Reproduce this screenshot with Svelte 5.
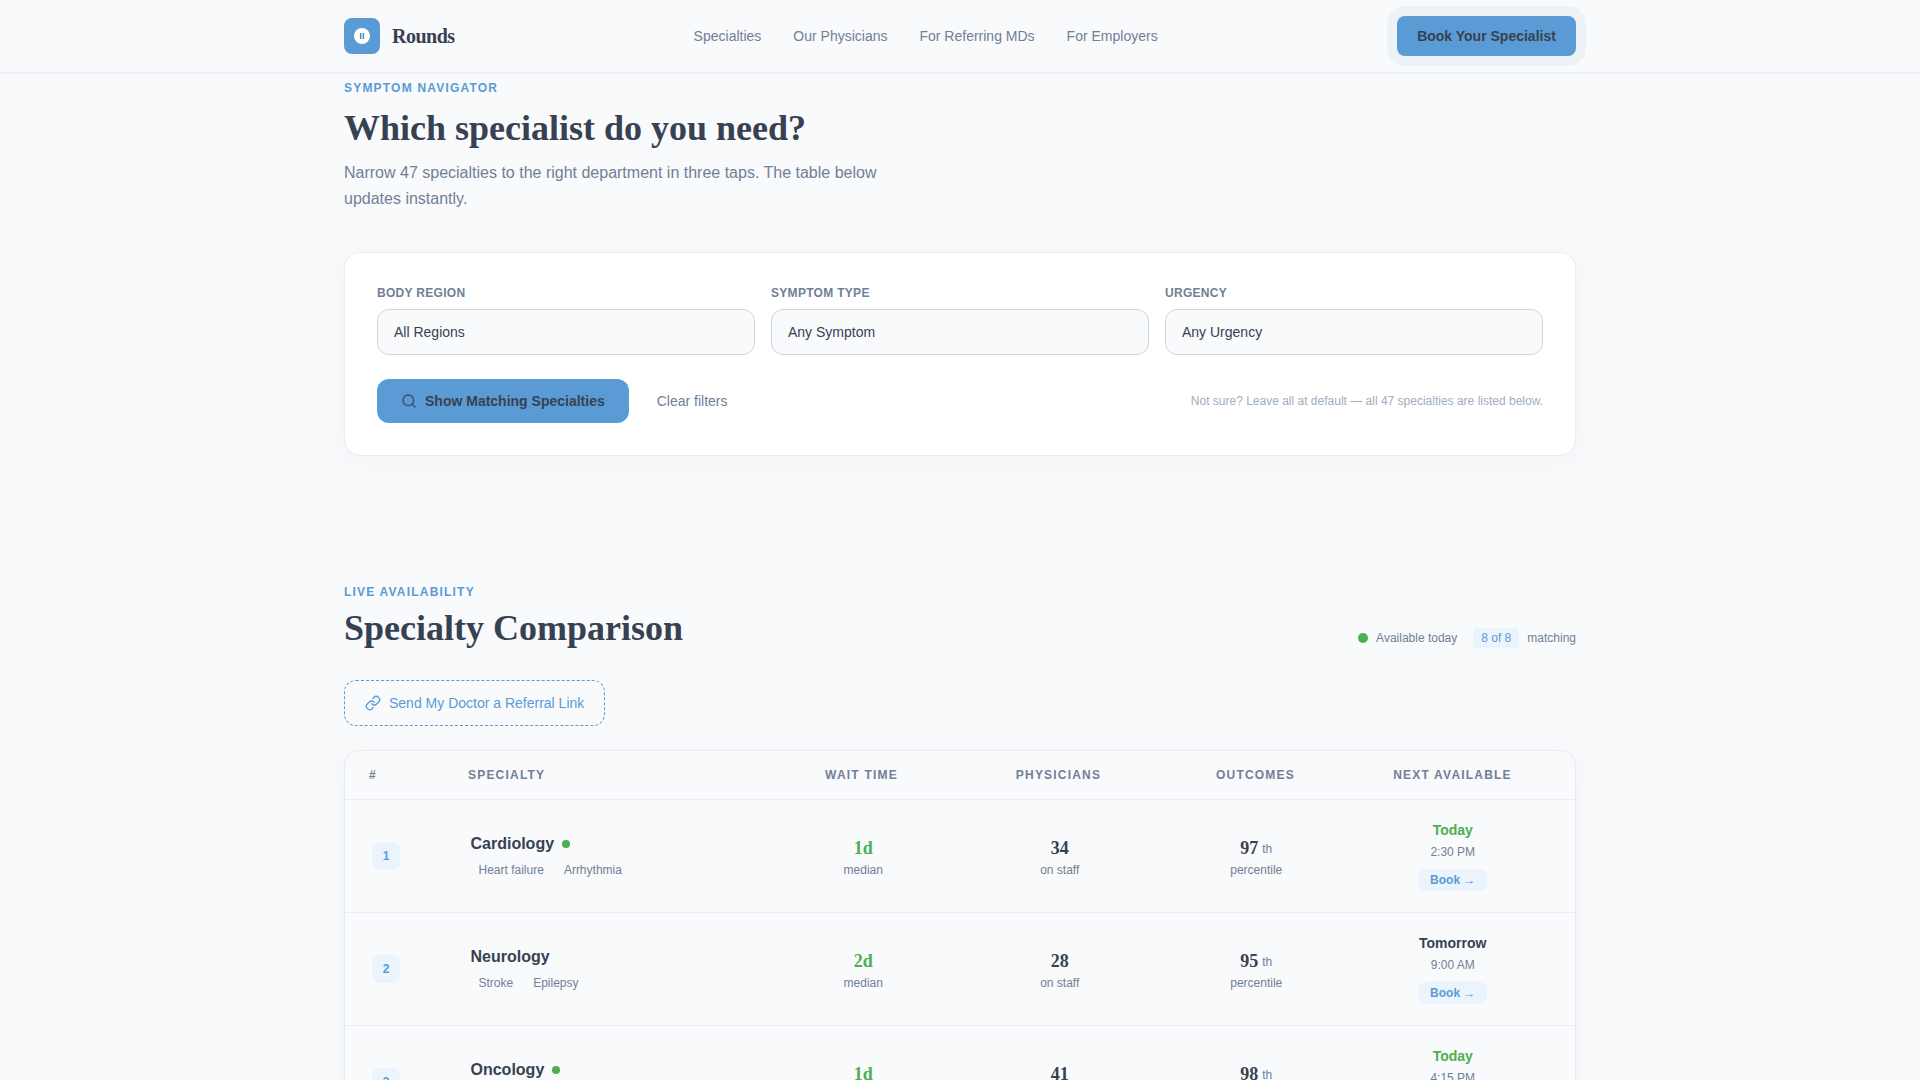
<script>
  const rows = [
    { n: 1, name: 'Cardiology', live: true, tags: ['Heart failure', 'Arrhythmia'], wait: '1d', docs: 34, pct: 97, day: 'Today', time: '2:30 PM' },
    { n: 2, name: 'Neurology', live: false, tags: ['Stroke', 'Epilepsy'], wait: '2d', docs: 28, pct: 95, day: 'Tomorrow', time: '9:00 AM' },
    { n: 3, name: 'Oncology', live: true, tags: ['Screening', 'Chemotherapy'], wait: '1d', docs: 41, pct: 98, day: 'Today', time: '4:15 PM' }
  ];
  const filters = [
    { label: 'Body Region', value: 'All Regions' },
    { label: 'Symptom Type', value: 'Any Symptom' },
    { label: 'Urgency', value: 'Any Urgency' }
  ];
</script>

<header class="nav">
  <div class="nav-in">
    <a class="brand" href="#top">
      <span class="mark">
        <svg width="18" height="18" viewBox="0 0 18 18"><circle cx="9" cy="9" r="8" fill="#fff"/><rect x="6.9" y="6" width="1.5" height="6" fill="#5a85b0"/><rect x="9.6" y="6" width="1.5" height="6" fill="#5a85b0"/></svg>
      </span>
      <span class="brand-name">Rounds</span>
    </a>
    <nav class="links">
      <a href="#top">Specialties</a>
      <a href="#top">Our Physicians</a>
      <a href="#top">For Referring MDs</a>
      <a href="#top">For Employers</a>
    </nav>
    <button class="cta">Book Your Specialist</button>
  </div>
</header>

<main class="wrap">
  <section class="hero">
    <div class="eyebrow">Symptom Navigator</div>
    <h1>Which specialist do you need?</h1>
    <p class="lead">Narrow 47 specialties to the right department in three taps. The table below updates instantly.</p>
  </section>

  <section class="panel">
    <div class="fields">
      {#each filters as f}
        <label class="field">
          <span class="field-label">{f.label}</span>
          <select><option>{f.value}</option></select>
        </label>
      {/each}
    </div>
    <div class="actions">
      <button class="primary">
        <svg class="search" width="16" height="16" viewBox="0 0 24 24" fill="none" stroke="currentColor" stroke-width="2" stroke-linecap="round" stroke-linejoin="round"><circle cx="11" cy="11" r="8"/><path d="m21 21-4.3-4.3"/></svg>
        Show Matching Specialties
      </button>
      <button class="clear">Clear filters</button>
      <span class="hint">Not sure? Leave all at default — all 47 specialties are listed below.</span>
    </div>
  </section>

  <section class="compare">
    <div class="compare-head">
      <div>
        <div class="eyebrow">Live Availability</div>
        <h2>Specialty Comparison</h2>
      </div>
      <div class="legend">
        <span class="legend-dot"></span>
        <span class="legend-text">Available today</span>
        <span class="pill">8 of 8</span>
        <span>matching</span>
      </div>
    </div>

    <button class="referral">
      <svg width="16" height="16" viewBox="0 0 24 24" fill="none" stroke="currentColor" stroke-width="2" stroke-linecap="round" stroke-linejoin="round"><path d="M10 13a5 5 0 0 0 7.54.54l3-3a5 5 0 0 0-7.07-7.07l-1.72 1.71"/><path d="M14 11a5 5 0 0 0-7.54-.54l-3 3a5 5 0 0 0 7.07 7.07l1.71-1.71"/></svg>
      Send My Doctor a Referral Link
    </button>

    <div class="table">
      <div class="thead">
        <span>#</span>
        <span>Specialty</span>
        <span class="c">Wait Time</span>
        <span class="c">Physicians</span>
        <span class="c">Outcomes</span>
        <span class="c">Next Available</span>
      </div>
      {#each rows as r}
        <div class="row">
          <div><span class="rank">{r.n}</span></div>
          <div class="spec">
            <div class="name">{r.name}{#if r.live}<span class="live"></span>{/if}</div>
            <div class="tags">{#each r.tags as t}<span class="tag">{t}</span>{/each}</div>
          </div>
          <div class="c metric">
            <div class="num green">{r.wait}</div>
            <div class="sub">median</div>
          </div>
          <div class="c metric">
            <div class="num">{r.docs}</div>
            <div class="sub">on staff</div>
          </div>
          <div class="c metric">
            <div class="num">{r.pct}<span class="th">th</span></div>
            <div class="sub">percentile</div>
          </div>
          <div class="c next">
            <div class="day" class:green={r.day === 'Today'}>{r.day}</div>
            <div class="time">{r.time}</div>
            <button class="book">Book →</button>
          </div>
        </div>
      {/each}
    </div>
  </section>
</main>

<style>
  :global(body) {
    margin: 0;
    background: #f8fafc;
    color: #374151;
    font-family: "Liberation Sans", Arial, sans-serif;
  }
  button { font-family: inherit; cursor: pointer; }
  a { text-decoration: none; color: inherit; }

  .nav {
    height: 73px;
    box-sizing: border-box;
    background: #f8fafc;
    border-bottom: 1px solid #e8ecf1;
    box-shadow: 0 1px 3px rgba(0, 0, 0, 0.04);
  }
  .nav-in {
    width: 1232px;
    margin: 0 auto;
    height: 72px;
    display: flex;
    align-items: center;
  }
  .brand { display: flex; align-items: center; gap: 12px; }
  .mark {
    width: 36px;
    height: 36px;
    border-radius: 8px;
    background: #5b9bd5;
    display: flex;
    align-items: center;
    justify-content: center;
  }
  .brand-name {
    font-family: "Liberation Serif", serif;
    font-weight: 700;
    font-size: 20px;
    letter-spacing: -0.5px;
  }
  .links {
    display: flex;
    gap: 32px;
    margin-left: 239px;
    font-size: 14px;
    color: #718096;
  }
  .cta {
    margin-left: auto;
    height: 40px;
    width: 179px;
    border: 0;
    border-radius: 8px;
    background: #5b9bd5;
    color: #374151;
    font-size: 14px;
    font-weight: 700;
    box-shadow: 0 0 0 10px #edf2f7;
  }

  .wrap { width: 1232px; margin: 0 auto; padding-top: 7px; }
  .eyebrow {
    font-size: 12px;
    line-height: 16px;
    font-weight: 700;
    letter-spacing: 1.2px;
    text-transform: uppercase;
    color: #5b9bd5;
  }
  h1, h2 {
    font-family: "Liberation Serif", serif;
    font-weight: 700;
    font-size: 36px;
    line-height: 44px;
    color: #374151;
  }
  h1 { margin: 10px 0 0; }
  h2 { margin: 6px 0 0; }
  .lead {
    margin: 10px 0 0;
    max-width: 560px;
    font-size: 16px;
    line-height: 26px;
    color: #718096;
  }

  .panel {
    margin-top: 40px;
    box-sizing: border-box;
    height: 204px;
    padding: 33px 32px 32px;
    background: #fff;
    border: 1px solid #e8ecf1;
    border-radius: 16px;
    box-shadow: 0 4px 24px rgba(45, 55, 72, 0.04);
  }
  .fields { display: grid; grid-template-columns: repeat(3, 1fr); gap: 16px; }
  .field { display: flex; flex-direction: column; gap: 9px; }
  .field-label {
    font-size: 12px;
    line-height: 14px;
    font-weight: 700;
    letter-spacing: 0.3px;
    text-transform: uppercase;
    color: #718096;
  }
  select {
    appearance: none;
    height: 46px;
    padding: 0 16px;
    border: 1px solid #cbd5e0;
    border-radius: 12px;
    background: #f8fafc;
    color: #374151;
    font: 14px "Liberation Sans", Arial, sans-serif;
  }
  .actions { display: flex; align-items: center; margin-top: 24px; }
  .primary {
    display: flex;
    align-items: center;
    gap: 8px;
    height: 44px;
    padding: 0 24px;
    border: 0;
    border-radius: 12px;
    background: #5b9bd5;
    color: #374151;
    font-size: 14px;
    font-weight: 700;
  }
  .search { opacity: 0.85; }
  .clear {
    margin-left: 28px;
    padding: 0;
    border: 0;
    background: none;
    color: #718096;
    font-size: 14px;
  }
  .hint { margin-left: auto; font-size: 12px; color: #a0aec0; }

  .compare { margin-top: 128px; }
  .compare-head { display: flex; justify-content: space-between; align-items: flex-end; }
  .legend {
    display: flex;
    align-items: center;
    margin-bottom: 2px;
    font-size: 12px;
    color: #718096;
  }
  .legend-dot { width: 10px; height: 10px; border-radius: 50%; background: #4caf50; }
  .legend-text { margin-left: 8px; }
  .pill {
    margin: 0 8px 0 16px;
    padding: 0 8px;
    line-height: 20px;
    border-radius: 4px;
    background: #ebf4fc;
    color: #5b9bd5;
  }

  .referral {
    display: flex;
    align-items: center;
    gap: 8px;
    height: 46px;
    margin-top: 30px;
    padding: 0 20px;
    border: 1px dashed #5b9bd5;
    border-radius: 12px;
    background: transparent;
    color: #5b9bd5;
    font-size: 14px;
  }

  .table {
    margin-top: 24px;
    background: #f8fafc;
    border: 1px solid #e8ecf1;
    border-radius: 16px;
    box-shadow: 0 4px 24px rgba(45, 55, 72, 0.04);
  }
  .thead {
    display: grid;
    grid-template-columns: 99px 1fr repeat(4, 197px);
    align-items: center;
    height: 48px;
    padding: 0 24px;
    font-size: 12px;
    font-weight: 700;
    letter-spacing: 1.2px;
    text-transform: uppercase;
    color: #718096;
  }
  .c { text-align: center; }
  .row {
    display: grid;
    grid-template-columns: 98.5px 1fr repeat(4, 196.5px);
    align-items: center;
    height: 113px;
    box-sizing: border-box;
    padding: 0 24px 0 27px;
    border-top: 1px solid #e8ecf1;
  }
  .rank {
    display: flex;
    align-items: center;
    justify-content: center;
    width: 28px;
    height: 28px;
    border-radius: 8px;
    background: #ebf4fc;
    color: #5b9bd5;
    font-size: 12px;
    font-weight: 700;
  }
  .spec { padding-bottom: 1px; }
  .name {
    display: flex;
    align-items: center;
    font-size: 16px;
    line-height: 24px;
    font-weight: 700;
  }
  .live {
    width: 8px;
    height: 8px;
    margin-left: 8px;
    border-radius: 50%;
    background: #4caf50;
  }
  .tags { display: flex; gap: 4px; margin-top: 5px; }
  .tag { padding: 0 8px; font-size: 12px; line-height: 18px; color: #718096; }
  .metric { padding-top: 3px; }
  .num {
    font-family: "Liberation Serif", serif;
    font-weight: 700;
    font-size: 18px;
    line-height: 24px;
  }
  .th {
    margin-left: 4px;
    font-family: "Liberation Sans", Arial, sans-serif;
    font-weight: 400;
    font-size: 12px;
    line-height: 0;
    vertical-align: 1px;
    color: #718096;
  }
  .sub { margin-top: 1px; font-size: 12px; line-height: 18px; color: #718096; }
  .green { color: #4caf50; }
  .next { padding-bottom: 1px; }
  .day { font-size: 14px; line-height: 20px; font-weight: 700; }
  .time { margin-top: 3px; font-size: 12px; line-height: 18px; color: #718096; }
  .book {
    margin-top: 8px;
    height: 22px;
    width: 69px;
    padding: 0;
    border: 0;
    border-radius: 8px;
    background: #ebf4fc;
    color: #5b9bd5;
    font-size: 12px;
    font-weight: 700;
  }
</style>
